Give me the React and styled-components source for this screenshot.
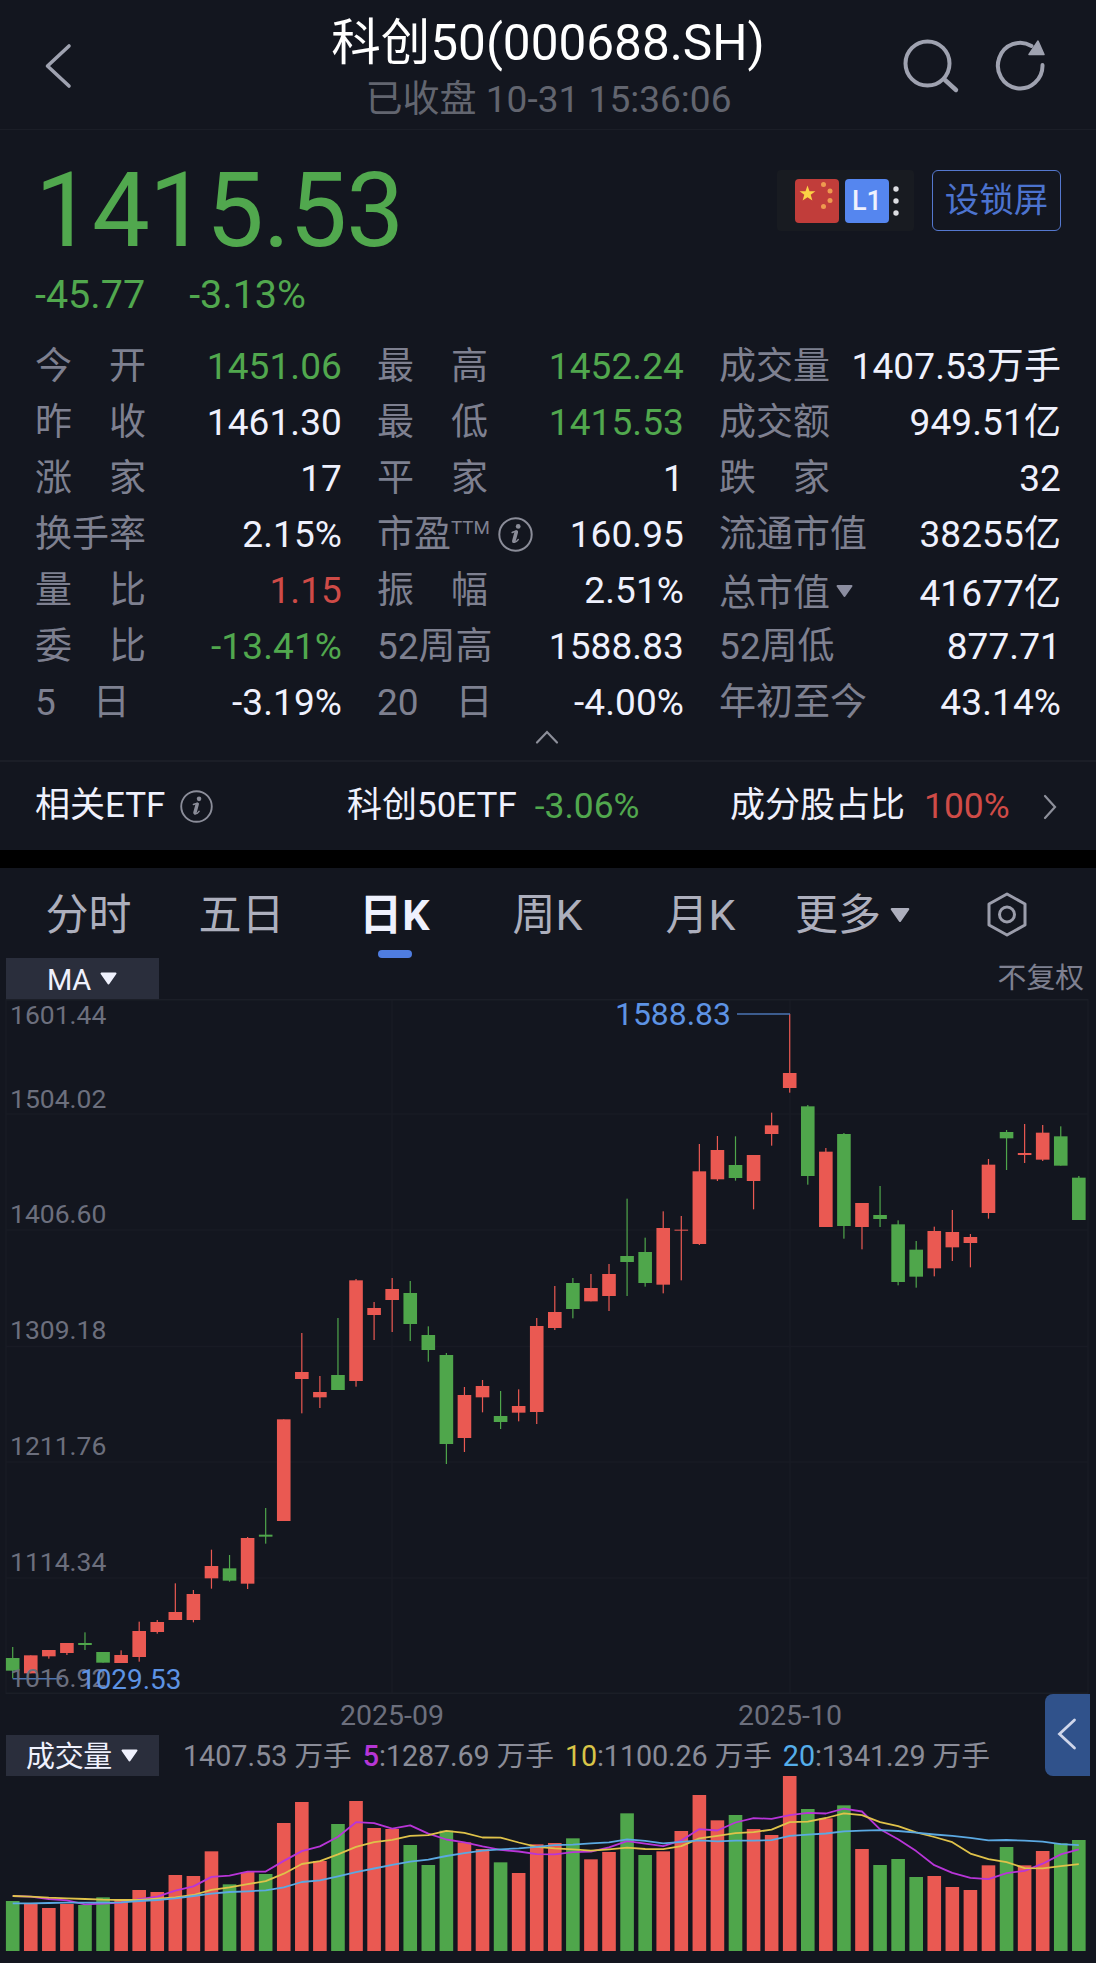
import React from "react";
import styled, { createGlobalStyle } from "styled-components";

const color = {
  bg: "#13161f",
  line: "#1b1e27",
  grid: "#181b24",
  text: "#eff1fd",
  label: "#7e8090",
  icon: "#9fa2b0",
  tab: "#adafbd",
  muted: "#62656f",
  axis: "#6c6f7d",
  up: "#cf4b47",
  down: "#51a84e",
  barUp: "#ea5952",
  barDown: "#4fa64b",
  blue: "#4f7de0",
  mark: "#5d93e4",
};

const GlobalStyle = createGlobalStyle`
  * { box-sizing: border-box; }
  body {
    margin: 0;
    background: ${color.bg};
    color: ${color.text};
    font-family: Roboto, "Noto Sans CJK SC", sans-serif;
  }
  svg { display: block; flex: none; overflow: visible; }
`;

const Page = styled.div`
  width: 1096px;
  height: 1963px;
  overflow: hidden;
  background: ${color.bg};
  display: flex;
  flex-direction: column;
`;

/* ---------- header ---------- */

const Header = styled.header`
  height: 130px;
  flex: none;
  display: grid;
  grid-template-columns: 320px 1fr 320px;
  border-bottom: 1px solid ${color.line};
`;

const HeaderSide = styled.div`
  display: flex;
  align-items: center;
  justify-content: ${(p) => (p.$end ? "flex-end" : "flex-start")};
  gap: 37px;
  padding: 2px 50px 0 42.5px;
`;

const TitleBlock = styled.div`
  display: flex;
  flex-direction: column;
  align-items: center;
  padding-top: 13px;
  white-space: nowrap;
`;

const Title = styled.h1`
  margin: 0;
  font-size: 49.5px;
  font-weight: 400;
  line-height: 60px;
  color: #fff;
`;

const Subtitle = styled.div`
  margin-top: 2px;
  padding-left: 1px;
  font-size: 37px;
  letter-spacing: 0.03px;
  line-height: 50px;
  color: ${color.muted};
`;

/* ---------- quote ---------- */

const Quote = styled.section`
  height: 632px;
  flex: none;
  display: flex;
  flex-direction: column;
  padding: 31px 35px 0 35px;
  border-bottom: 2px solid ${color.line};
`;

const PriceRow = styled.div`
  display: flex;
  justify-content: space-between;
  height: 109px;
`;

const Price = styled.div`
  font-size: 103px;
  line-height: 100px;
  letter-spacing: -0.9px;
  color: ${color.down};
`;

const Actions = styled.div`
  display: flex;
  gap: 18px;
  padding-top: 9px;
`;

const Badges = styled.div`
  width: 137px;
  height: 61px;
  display: flex;
  align-items: center;
  gap: 6px;
  padding-left: 18px;
  border-radius: 4px;
  background: #181b21;
`;

const Badge = styled.div`
  width: 44px;
  height: 44px;
  border-radius: 4px;
  background: ${(p) => p.$bg};
  display: flex;
  align-items: center;
  justify-content: center;
  font-size: 27px;
  font-weight: 500;
  line-height: 44px;
`;

const LockButton = styled.button`
  width: 129px;
  height: 61px;
  padding: 0 0 1px;
  border: 1px solid #5578cf;
  border-radius: 6px;
  background: none;
  color: #4c73cf;
  font: 400 34.5px/1 Roboto, "Noto Sans CJK SC", sans-serif;
`;

const ChangeRow = styled.div`
  display: flex;
  gap: 44px;
  height: 69px;
  font-size: 39.5px;
  line-height: 49px;
  color: ${color.down};
`;

const Stats = styled.div`
  display: grid;
  grid-template-columns: 307px 307px 342px;
  grid-auto-rows: 56px;
  column-gap: 35px;
`;

const Stat = styled.div`
  display: flex;
  justify-content: space-between;
  padding-top: ${(p) => (p.$shift ? 3 : 0)}px;
  font-size: 37px;
  line-height: 56px;
  white-space: nowrap;
`;

const StatLabel = styled.div`
  display: flex;
  color: ${color.label};
`;

const StatSuper = styled.span`
  font-size: 18.8px;
  line-height: 42px;
`;

const StatValue = styled.div`
  letter-spacing: 0.1px;
  color: ${(p) => (p.$tone ? color[p.$tone] : color.text)};
`;

const InfoSlot = styled.span`
  padding: ${(p) => p.$pad};
`;

const Collapse = styled.div`
  display: flex;
  justify-content: center;
  padding-right: 2px;
  margin-top: -2px;
`;

/* ---------- related ETF ---------- */

const EtfBar = styled.section`
  height: 88px;
  flex: none;
  display: grid;
  grid-template-columns: 312px 383px 1fr auto;
  align-items: center;
  padding: 0 39px 0 35px;
  font-size: 35px;
  line-height: 88px;
  white-space: nowrap;
`;

const EtfCell = styled.div`
  display: flex;
  align-items: center;
  gap: ${(p) => p.$gap}px;
`;

const Tone = styled.span`
  font-size: 35.4px;
  color: ${(p) => color[p.$tone]};
`;

const Divider = styled.div`
  height: 18px;
  flex: none;
  background: #000;
`;

/* ---------- period tabs ---------- */

const Tabs = styled.nav`
  height: 90px;
  flex: none;
  display: grid;
  grid-template-columns: repeat(5, 153px) 1fr auto;
  padding-left: 12px;
`;

const Tab = styled.div`
  display: flex;
  flex-direction: column;
  align-items: center;
  font-size: 43px;
  line-height: 82px;
  padding-top: 6px;
  height: 90px;
  white-space: nowrap;
  font-weight: ${(p) => (p.$active ? 700 : 400)};
  color: ${(p) => (p.$active ? color.text : color.tab)};
`;

const TabMark = styled.span`
  width: 34px;
  height: 8px;
  flex: none;
  margin-top: -6px;
  border-radius: 4px;
  background: ${color.blue};
`;

const MoreTab = styled.div`
  display: flex;
  align-items: center;
  gap: 9px;
  padding-left: 18px;
  font-size: 43px;
  line-height: 82px;
  height: 94px;
  white-space: nowrap;
  color: ${color.tab};
`;

const GearSlot = styled.div`
  padding: 24px 69px 0 0;
`;

/* ---------- chart ---------- */

const Toolbar = styled.div`
  height: 41px;
  flex: none;
  display: flex;
  justify-content: space-between;
  padding: 0 12px 0 6px;
`;

const Picker = styled.div`
  width: 153px;
  height: 41px;
  display: flex;
  align-items: center;
  justify-content: center;
  gap: 9px;
  padding-right: 1px;
  background: #2a2e3c;
  font-size: 29px;
  letter-spacing: -0.3px;
`;

const PickerText = styled.span`
  line-height: 38px;
  padding-top: 3px;
`;

const Adjust = styled.div`
  font-size: 28.8px;
  line-height: 41px;
  color: ${color.label};
`;

const DateRow = styled.div`
  height: 41px;
  flex: none;
  display: grid;
  grid-template-columns: 784px 1fr;
  position: relative;
  font-size: 28.5px;
  line-height: 43px;
  color: ${color.axis};
`;

const DateLabel = styled.span`
  width: 104px;
  justify-self: ${(p) => (p.$first ? "end" : "start")};
  margin: ${(p) => (p.$first ? "0 340px 0 0" : "0 0 0 -46px")};
  text-align: center;
`;

const SideHandle = styled.div`
  position: absolute;
  right: 6px;
  top: 0;
  width: 45px;
  height: 82px;
  display: flex;
  align-items: center;
  justify-content: center;
  padding: 0 2px 3px 0;
  border-radius: 8px 0 0 8px;
  background: #30528b;
`;

const VolumeBar = styled.div`
  height: 41px;
  flex: none;
  display: flex;
  padding-left: 6px;
  font-size: 28.7px;
  line-height: 43px;
  white-space: nowrap;
`;

const VolumeText = styled.span`
  color: #8a8c98;
  letter-spacing: ${(p) => (p.$tight ? "-0.08px" : "0")};
  margin-left: ${(p) => p.$gap}px;
`;

const Key = styled.span`
  color: ${(p) => p.$c};
  font-weight: ${(p) => (p.$bold ? 500 : 400)};
`;

/* ---------- icons ---------- */

const Triangle = ({ w = 17, h = 12, fill = color.text }) => (
  <svg width={w} height={h} viewBox="0 0 17 12">
    <path d="M1.5 1H15.5L8.5 11Z" fill={fill} stroke={fill} strokeWidth="2" strokeLinejoin="round" />
  </svg>
);

const InfoIcon = ({ size = 35 }) => (
  <svg width={size} height={size} viewBox="0 0 35 35" fill="none" stroke="#8b8d99">
    <circle cx="17.5" cy="17.5" r="16.2" strokeWidth="2" />
    <circle cx="20.2" cy="9.4" r="2.4" fill="#8b8d99" stroke="none" />
    <path d="M14.2 15.4C16 14.6 17.6 14.3 18.8 14.3" strokeWidth="1.6" strokeLinecap="round" />
    <path d="M18.3 15L15.8 24.2" strokeWidth="3.6" strokeLinecap="round" />
    <path d="M15.6 25.2C17 25.6 18.8 24.6 20.2 22.6" strokeWidth="1.6" strokeLinecap="round" />
  </svg>
);

const BackIcon = () => (
  <svg width="30" height="48" viewBox="0 0 30 48" fill="none">
    <path d="M26 4L4.5 24L26 44" stroke={color.icon} strokeWidth="3.6" strokeLinecap="round" strokeLinejoin="round" />
  </svg>
);

const SearchIcon = () => (
  <svg width="56" height="54" viewBox="0 0 56 54" fill="none" stroke={color.icon}>
    <circle cx="24.5" cy="24.5" r="22" strokeWidth="4" />
    <path d="M42 41L53 51" strokeWidth="4.4" strokeLinecap="round" />
  </svg>
);

const RefreshIcon = () => (
  <svg width="50" height="52" viewBox="0 0 50 52" fill="none">
    <path d="M46.5 25A22.3 22.8 0 1 1 35.5 6" stroke={color.icon} strokeWidth="4" strokeLinecap="round" />
    <path d="M42 1L48 14.5H33Z" fill={color.icon} stroke={color.icon} strokeWidth="1.5" strokeLinejoin="round" />
  </svg>
);

const FlagStars = () => (
  <svg width="44" height="44" viewBox="0 0 44 44">
    <path d="M12.5 6.5L14.5 12.2H20.4L15.7 15.8L17.4 21.6L12.5 18.2L7.6 21.6L9.3 15.8L4.6 12.2H10.5Z" fill="#fbd245" />
    {[[28.5, 5.5], [35, 12], [35, 21.5], [28.5, 27.5]].map(([x, y]) => (
      <circle key={y} cx={x} cy={y} r="2.5" fill="#ee9a4f" />
    ))}
  </svg>
);

const DotsSvg = styled.svg`
  margin-left: -2px;
`;

const Dots = () => (
  <DotsSvg width="6" height="32" viewBox="0 0 6 32" fill="#dcdde2">
    <circle cx="3" cy="4" r="2.7" />
    <circle cx="3" cy="16" r="2.7" />
    <circle cx="3" cy="28" r="2.7" />
  </DotsSvg>
);

const GearIcon = () => (
  <svg width="40" height="45" viewBox="0 0 40 45" fill="none" stroke="#9b9dab" strokeWidth="3">
    <path d="M20 2L38 12V33L20 43L2 33V12Z" strokeLinejoin="round" />
    <circle cx="20" cy="22.5" r="7.5" />
  </svg>
);

/* ---------- data ---------- */

const STATS = [
  [["今　开", "1451.06", "down"], ["最　高", "1452.24", "down"], ["成交量", "1407.53万手"]],
  [["昨　收", "1461.30"], ["最　低", "1415.53", "down"], ["成交额", "949.51亿"]],
  [["涨　家", "17"], ["平　家", "1"], ["跌　家", "32"]],
  [["换手率", "2.15%"], ["市盈", "160.95"], ["流通市值", "38255亿"]],
  [["量　比", "1.15", "up"], ["振　幅", "2.51%"], ["总市值", "41677亿"]],
  [["委　比", "-13.41%", "down"], ["52周高", "1588.83"], ["52周低", "877.71"]],
  [["5　日", "-3.19%"], ["20　日", "-4.00%"], ["年初至今", "43.14%"]],
].flat();

// Each block: base line, then [direction, high, body top, body bottom, low] in thirds of a pixel.
const CANDLE_BLOCKS = [
  [391, [
    ["g", 771, 804, 842, 865], ["r", 796, 796, 850, 850], ["r", 780, 780, 799, 806], ["r", 759, 759, 789, 795],
    ["g", 727, 759, 765, 780], ["g", 786, 786, 818, 818], ["r", 781, 795, 819, 819], ["r", 695, 723, 801, 815],
    ["r", 690, 696, 726, 731], ["r", 580, 666, 690, 690], ["r", 600, 612, 690, 697], ["r", 479, 528, 565, 596],
    ["g", 495, 535, 572, 575], ["r", 441, 444, 581, 597], ["g", 354, 434, 440, 461], ["r", 88, 88, 393, 393],
  ]],
  [181, [
    ["r", 459, 576, 597, 700], ["r", 588, 636, 652, 684], ["g", 414, 585, 630, 630], ["r", 297, 301, 603, 620],
    ["r", 366, 384, 405, 480], ["r", 294, 327, 360, 456], ["g", 303, 339, 432, 483], ["g", 439, 465, 510, 545],
    ["g", 519, 525, 792, 852], ["r", 621, 645, 774, 816], ["r", 600, 618, 652, 697], ["g", 633, 708, 726, 747],
    ["r", 628, 678, 698, 724], ["r", 414, 438, 696, 732], ["r", 318, 396, 444, 450], ["g", 294, 309, 387, 415],
    ["r", 282, 324, 364, 364], ["r", 252, 282, 348, 393],
  ]],
  [1, [
    ["g", 596, 768, 786, 888], ["g", 713, 756, 849, 860], ["r", 634, 684, 854, 880], ["r", 648, 689, 692, 841],
    ["r", 432, 514, 732, 735], ["r", 408, 450, 538, 543], ["g", 409, 495, 534, 542], ["r", 465, 465, 543, 628],
    ["r", 338, 376, 402, 437], ["r", 42, 219, 264, 278],
  ]],
  [51, [
    ["g", 165, 169, 378, 404], ["r", 294, 305, 531, 531], ["g", 249, 252, 528, 566], ["r", 459, 459, 531, 598],
    ["g", 408, 495, 507, 531], ["g", 511, 523, 696, 706], ["g", 573, 599, 680, 713], ["r", 530, 543, 655, 679],
    ["r", 480, 546, 592, 633], ["r", 552, 561, 579, 652], ["r", 327, 344, 489, 506], ["g", 240, 246, 265, 360],
    ["r", 222, 309, 315, 339], ["r", 225, 248, 329, 333], ["g", 229, 259, 347, 347], ["g", 378, 383, 510, 510],
  ]],
];

const CANDLES = CANDLE_BLOCKS.flatMap(([base, rows]) =>
  rows.map(([dir, ...ys]) => [dir, ...ys.map((v) => base + v / 3)])
);

const VOLUME = [
  663, 670, 684, 672, 675, 652, 657, 630, 636, 585, 588, 514, 613, 576, 582, 429, 366, 543, 432, 363,
  444, 447, 495, 555, 452, 487, 507, 547, 579, 493, 489, 475, 538, 516, 400, 525, 514, 453, 345, 421,
  405, 447, 465, 288, 387, 415, 376, 507, 555, 537, 591, 588, 621, 630, 556, 501, 556, 513, 490, 480,
].map((v) => (v - 288) / 3);

// Averages before the first full window come from earlier sessions.
const LEAD = {
  5: [648, 650, 657, 661],
  10: [648, 650, 653, 655, 657, 659, 660, 660, 656],
  20: [670, 670, 669, 668, 668, 668, 667, 663, 660, 655, 648, 641, 636, 634, 631, 622, 606, 601, 589],
};

const x = (i) => 12.7 + i * 18.07;
const fill = (dir) => (dir === "r" ? color.barUp : color.barDown);

const average = (n) =>
  VOLUME.map((_, i) => {
    const y =
      i < n - 1
        ? (LEAD[n][i] - 288) / 3
        : VOLUME.slice(i - n + 1, i + 1).reduce((a, b) => a + b, 0) / n;
    return `${x(i).toFixed(1)},${y.toFixed(1)}`;
  }).join(" ");

const AXIS = [
  ["1601.44", 25], ["1504.02", 109], ["1406.60", 224], ["1309.18", 340],
  ["1211.76", 456], ["1114.34", 572], ["1016.92", 688],
];

const CandleChart = () => (
  <svg width="1096" height="695" viewBox="0 0 1096 695">
    <g stroke={color.grid} strokeWidth="1.5">
      {[115, 231, 347.5, 463, 579].map((y) => (
        <path key={y} d={`M6 ${y}H1088`} />
      ))}
      {[6, 392, 790, 1088].map((v) => (
        <path key={v} d={`M${v} 0V695`} />
      ))}
    </g>
    <path d="M6 .75H1088M6 694.25H1088" stroke={color.line} strokeWidth="1.5" />
    {CANDLES.map(([dir, high, top, bottom, low], i) => (
      <g key={i} fill={fill(dir)}>
        <rect x={x(i) - 0.6} y={high} width="1.2" height={low - high} />
        <rect x={x(i) - 6.8} y={top} width="13.6" height={bottom - top} />
      </g>
    ))}
    <g stroke="#4b74b5" strokeWidth="1.4">
      <path d="M737 15H790" />
      <path d="M12.7 679.7H62" />
    </g>
    <g fontSize="26.5" fill={color.axis}>
      {AXIS.map(([t, y]) => (
        <text key={t} x="10" y={y}>{t}</text>
      ))}
    </g>
    <g fill={color.mark}>
      <text x="615" y="25.5" fontSize="31.9">1588.83</text>
      <text x="80" y="689.5" fontSize="27.9">1029.53</text>
    </g>
  </svg>
);

const VolumeChart = () => (
  <svg width="1096" height="187" viewBox="0 0 1096 187">
    {VOLUME.map((top, i) => (
      <rect key={i} x={x(i) - 6.8} y={top} width="13.6" height={175 - top} fill={fill(CANDLES[i][0])} />
    ))}
    <g fill="none" strokeWidth="1.8" strokeLinejoin="round">
      <polyline points={average(5)} stroke="#b835d8" />
      <polyline points={average(10)} stroke="#dfc24a" />
      <polyline points={average(20)} stroke="#5ba9e2" />
    </g>
  </svg>
);

export default function App() {
  return (
    <Page>
      <GlobalStyle />
      <Header>
        <HeaderSide><BackIcon /></HeaderSide>
        <TitleBlock>
          <Title>科创50(000688.SH)</Title>
          <Subtitle>已收盘 10-31 15:36:06</Subtitle>
        </TitleBlock>
        <HeaderSide $end>
          <SearchIcon />
          <RefreshIcon />
        </HeaderSide>
      </Header>

      <Quote>
        <PriceRow>
          <Price>1415.53</Price>
          <Actions>
            <Badges>
              <Badge $bg="#c13d3a"><FlagStars /></Badge>
              <Badge $bg="#5586ef">L1</Badge>
              <Dots />
            </Badges>
            <LockButton>设锁屏</LockButton>
          </Actions>
        </PriceRow>
        <ChangeRow>
          <span>-45.77</span>
          <span>-3.13%</span>
        </ChangeRow>
        <Stats>
          {STATS.map(([label, value, tone]) => (
            <Stat key={label} $shift={label === "总市值"}>
              <StatLabel>
                {label}
                {label === "市盈" && (
                  <>
                    <StatSuper>TTM</StatSuper>
                    <InfoSlot $pad="10px 0 0 8px"><InfoIcon /></InfoSlot>
                  </>
                )}
                {label === "总市值" && (
                  <InfoSlot $pad="19px 0 0 5px"><Triangle w={19} h={12} fill="#8b8da0" /></InfoSlot>
                )}
              </StatLabel>
              <StatValue $tone={tone}>{value}</StatValue>
            </Stat>
          ))}
        </Stats>
        <Collapse>
          <svg width="24" height="16" viewBox="0 0 24 16" fill="none">
            <path d="M2 13.5L12 3L22 13.5" stroke="#8d8f9a" strokeWidth="2.2" strokeLinecap="round" />
          </svg>
        </Collapse>
      </Quote>

      <EtfBar>
        <EtfCell $gap={15}>相关ETF<InfoIcon size={33} /></EtfCell>
        <EtfCell $gap={18}>科创50ETF<Tone $tone="down">-3.06%</Tone></EtfCell>
        <EtfCell $gap={19}>成分股占比<Tone $tone="up">100%</Tone></EtfCell>
        <svg width="14" height="26" viewBox="0 0 14 26" fill="none">
          <path d="M2 3L12 14L2 25" stroke="#8d8f9a" strokeWidth="2.2" strokeLinecap="round" />
        </svg>
      </EtfBar>

      <Divider />

      <Tabs>
        <Tab>分时</Tab>
        <Tab>五日</Tab>
        <Tab $active>日K<TabMark /></Tab>
        <Tab>周K</Tab>
        <Tab>月K</Tab>
        <MoreTab>更多<Triangle w={20} h={14} fill={color.tab} /></MoreTab>
        <GearSlot><GearIcon /></GearSlot>
      </Tabs>

      <Toolbar>
        <Picker><PickerText>MA</PickerText><Triangle w={17} h={13} /></Picker>
        <Adjust>不复权</Adjust>
      </Toolbar>

      <CandleChart />

      <DateRow>
        <DateLabel $first>2025-09</DateLabel>
        <DateLabel>2025-10</DateLabel>
        <SideHandle>
          <svg width="20" height="32" viewBox="0 0 20 32" fill="none">
            <path d="M17.5 2L2.5 16L17.5 30" stroke="#cfd6ea" strokeWidth="2.8" strokeLinecap="round" />
          </svg>
        </SideHandle>
      </DateRow>

      <VolumeBar>
        <Picker><PickerText>成交量</PickerText><Triangle w={17} h={13} /></Picker>
        <VolumeText $gap={24}>1407.53 万手</VolumeText>
        <VolumeText $gap={11} $tight><Key $c="#b636d6" $bold>5</Key>:1287.69 万手</VolumeText>
        <VolumeText $gap={11} $tight><Key $c="#d9c548">10</Key>:1100.26 万手</VolumeText>
        <VolumeText $gap={11} $tight><Key $c="#55aeea">20</Key>:1341.29 万手</VolumeText>
      </VolumeBar>

      <VolumeChart />
    </Page>
  );
}
